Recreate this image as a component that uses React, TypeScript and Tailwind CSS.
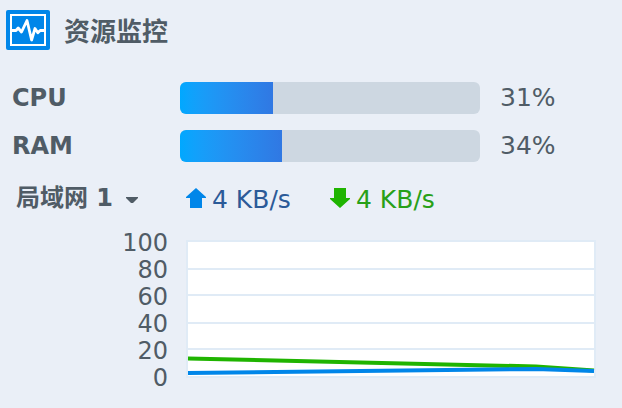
type Usage = { id: string; label: string; percent: number };

const usages: Usage[] = [
  { id: "cpu", label: "CPU", percent: 31 },
  { id: "ram", label: "RAM", percent: 34 },
];

const ticks = [100, 80, 60, 40, 20, 0];
const gridLines = [29, 55, 83, 109];

function MonitorIcon() {
  return (
    <svg width="44" height="40" viewBox="0 0 44 40" aria-hidden="true">
      <rect width="44" height="40" rx="2" fill="#0086e9" />
      <rect x="5" y="5" width="34" height="30" fill="none" stroke="#fff" strokeWidth="2" />
      <path
        d="M6 20.5H10L12.2 18L15.5 22L21 10.5L25.6 30L29 18.5L31.8 22.8L34.2 20.5H38"
        fill="none"
        stroke="#fff"
        strokeWidth="2.8"
        strokeLinejoin="round"
      />
    </svg>
  );
}

function UsageRow({ id, label, percent }: Usage) {
  return (
    <div className="flex h-8 items-center">
      <span id={id} className="w-[168px] font-bold">
        {label}
      </span>
      <div
        role="progressbar"
        aria-labelledby={id}
        aria-valuenow={percent}
        className="h-8 flex-1 overflow-hidden rounded-md bg-[#cdd7e1]"
      >
        <div
          className="h-full bg-linear-to-r from-[#00a8ff] to-[#3078e3]"
          style={{ width: `${percent}%` }}
        />
      </div>
      <span className="ml-5 w-[122px] text-[25px]">{percent}%</span>
    </div>
  );
}

export default function App() {
  return (
    <main className="min-h-screen bg-[#eaeff7] pt-2.5 pb-4 font-['DejaVu_Sans','Noto_Sans_CJK_SC',sans-serif] text-[24px] leading-8 text-[#505c66]">
      <header className="flex h-10 items-center gap-3.5 pl-1.5">
        <MonitorIcon />
        <h1 className="font-['Noto_Sans_CJK_SC',sans-serif] text-[26px] font-bold">资源监控</h1>
      </header>

      <section className="mt-8 flex flex-col gap-4 pl-3">
        {usages.map((u) => (
          <UsageRow key={u.id} {...u} />
        ))}
      </section>

      <section className="mt-[18px] flex h-10 items-center pl-4">
        <div className="grid w-[170px] items-center">
          <select
            aria-label="网络接口"
            className="col-start-1 row-start-1 h-8 w-[128px] appearance-none bg-transparent pb-1.5 font-bold leading-7 outline-none"
          >
            <option>局域网 1</option>
          </select>
          <svg
            className="pointer-events-none col-start-1 row-start-1 ml-[110px]"
            width="12"
            height="6"
            viewBox="0 0 12 6"
            aria-hidden="true"
          >
            <path d="M0 0H12V1L7 6H5L0 1Z" fill="#505c66" />
          </svg>
        </div>
        <div className="flex w-36 items-center gap-1.5 text-[25px] text-[#2b5a98]">
          <svg className="mb-1" width="20" height="20" viewBox="0 0 20 20" aria-label="上传">
            <path d="M10 0L20 9V10H16V20H4V10H0V9Z" fill="#0086e9" />
          </svg>
          <span>4 KB/s</span>
        </div>
        <div className="flex items-center gap-1.5 text-[25px] text-[#27a018]">
          <svg className="mb-1" width="20" height="20" viewBox="0 0 20 20" aria-label="下载">
            <path d="M10 20L20 11V10H16V0H4V10H0V11Z" fill="#1fb400" />
          </svg>
          <span>4 KB/s</span>
        </div>
      </section>

      <section className="mt-[10px] flex pr-[26px]">
        <div className="flex h-[161px] w-[168px] flex-col justify-between text-right leading-[27px]">
          {ticks.map((t) => (
            <span key={t}>{t}</span>
          ))}
        </div>
        <svg
          className="ml-[18px] mt-[10px] h-[138px] min-w-0 flex-1"
          viewBox="0 0 410 138"
          preserveAspectRatio="none"
          aria-label="网络流量"
        >
          <rect x="1" y="1" width="408" height="136" fill="#fff" stroke="#e0ebf6" strokeWidth="2" />
          {gridLines.map((y) => (
            <path key={y} d={`M2 ${y}H408`} stroke="#e0ebf6" strokeWidth="2" />
          ))}
          <path d="M2 118.5L350 126.5L408 130.5" fill="none" stroke="#1fb400" strokeWidth="4" />
          <path d="M2 133L350 129L408 131" fill="none" stroke="#0086e9" strokeWidth="4" />
        </svg>
      </section>
    </main>
  );
}
